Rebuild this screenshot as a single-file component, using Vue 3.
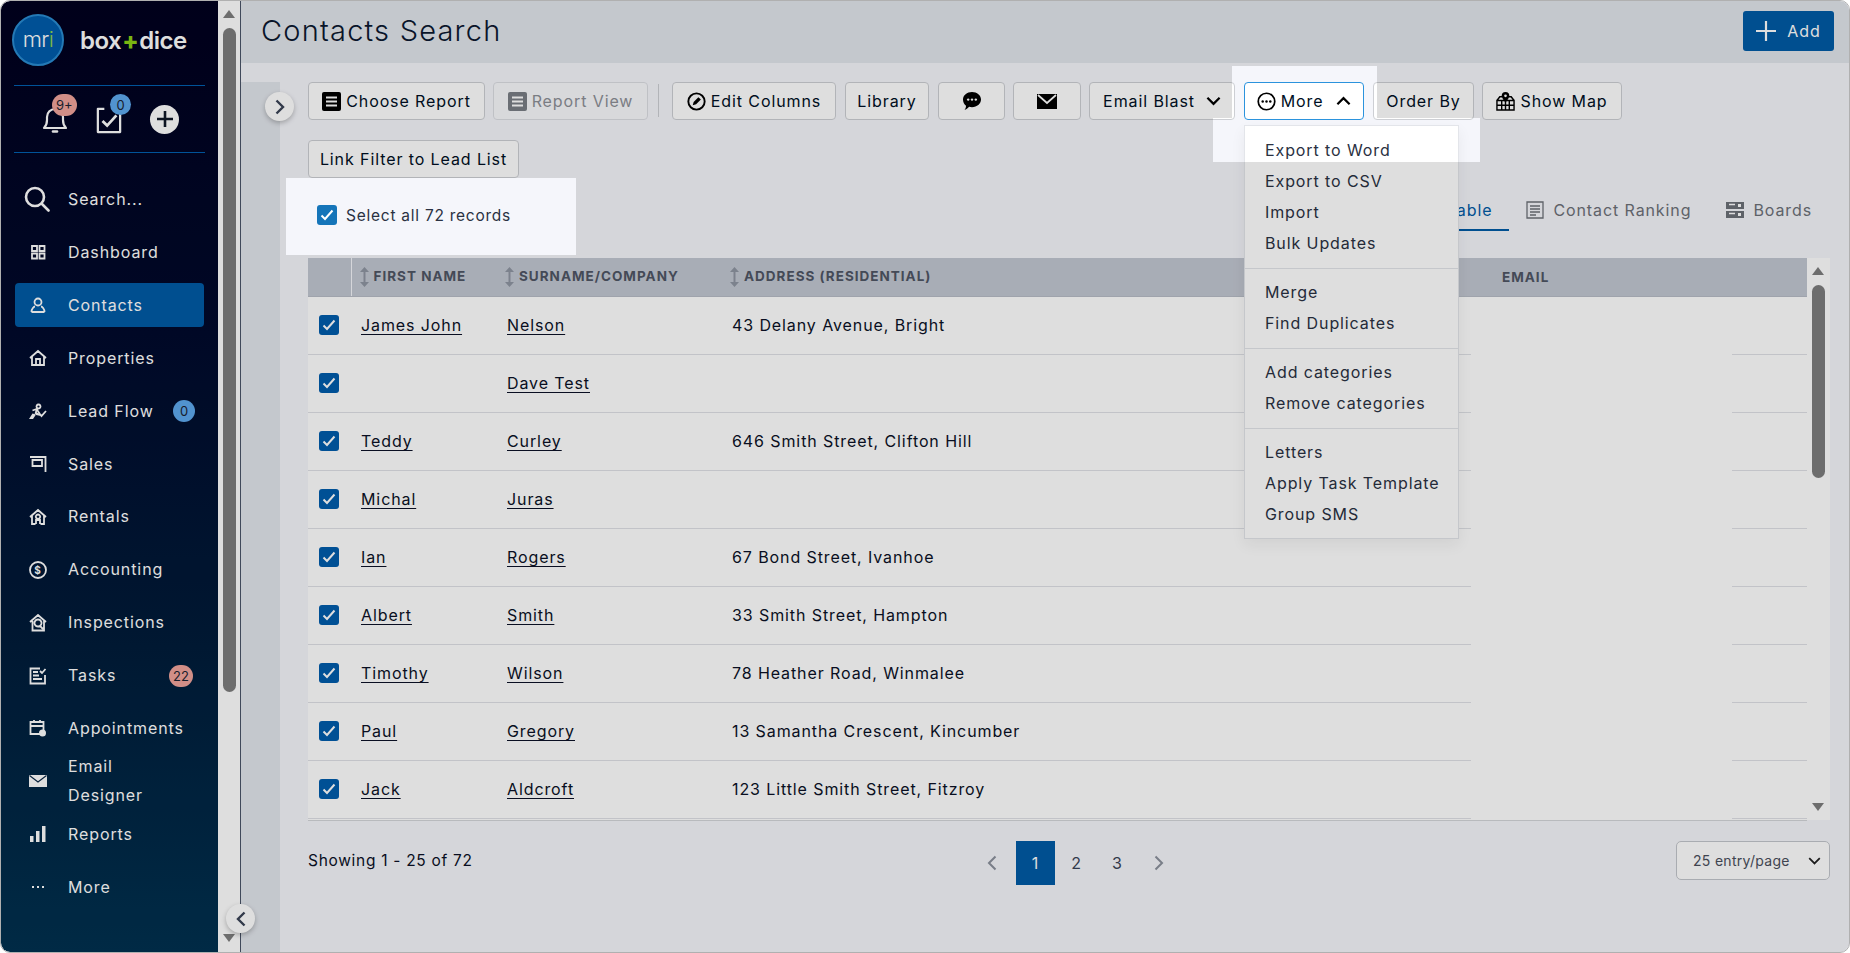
<template>
  <div class="window">
    <aside class="sidebar">
      <div class="brand">
        <div class="logo">mr<span class="logo-i">i</span></div>
        <div class="wordmark">box<span class="plus">+</span>dice</div>
      </div>
      <div class="quick">
        <div class="quick-item">
          <svg class="quick-icon" viewBox="0 0 26 28" fill="none" stroke="#fff" stroke-width="2.2">
            <path d="M2 22c2-2 3-4 3-8V11a8 8 0 0 1 16 0v3c0 4 1 6 3 8z" stroke-linejoin="round" />
            <path d="M11 25.5h4" stroke-linecap="round" stroke-width="2.6" />
          </svg>
          <span class="pill pill-red pill-top">9+</span>
        </div>
        <div class="quick-item task">
          <svg class="quick-icon" viewBox="0 0 28 30" fill="none" stroke="#fff" stroke-width="2.4">
            <path d="M9 3H2v25h24V5" stroke-linejoin="round" />
            <path d="M7 16l5 5 10-11" stroke-width="3" />
          </svg>
          <span class="pill pill-blue pill-top">0</span>
        </div>
        <div class="quick-add">
          <svg viewBox="0 0 18 18" width="18" height="18" stroke="#101828" stroke-width="2.6"><path d="M9 1v16M1 9h16" /></svg>
        </div>
      </div>
      <nav class="nav">
        <a class="nav-item search">
          <svg class="search-icon" viewBox="0 0 26 26" fill="none" stroke="#fff" stroke-width="2.6" stroke-linecap="round">
            <circle cx="11" cy="11" r="9" />
            <path d="M18 18l6.5 6.5" />
          </svg>
          <span>Search...</span>
        </a>
        <a v-for="item in navItems" :key="item.label" class="nav-item" :class="{ active: item.active }">
          <svg class="nav-icon" viewBox="0 0 18 18" fill="none" stroke="#fff" stroke-width="1.8">
            <path v-if="item.stroke" :d="item.stroke" />
            <path v-if="item.fill" :d="item.fill" fill="#fff" stroke="none" />
            <path v-if="item.cut" :d="item.cut" stroke="#0d2a48" stroke-width="1.2" />
            <text v-if="item.label === 'Accounting'" x="9" y="12.6" text-anchor="middle" font-size="10" font-weight="700" fill="#fff" stroke="none" font-family="Inter, sans-serif">$</text>
          </svg>
          <span class="nav-label">{{ item.label }}</span>
          <span v-if="item.badge" class="pill nav-badge" :class="item.badgeClass">{{ item.badge }}</span>
        </a>
      </nav>
    </aside>

    <div class="page-scroll">
      <div class="arrow-up"></div>
      <div class="page-thumb"></div>
      <div class="arrow-down"></div>
    </div>

    <main class="main">
      <header class="topbar">
        <h1>Contacts Search</h1>
        <button class="add-btn">
          <svg viewBox="0 0 20 20" width="20" height="20" stroke="#fff" stroke-width="2.2"><path d="M10 0v20M0 10h20" /></svg>
          Add
        </button>
      </header>

      <div class="body">
        <div class="rail"></div>
        <div class="content">
          <div class="toolbar">
            <button class="btn w-choose">
              <svg class="doc-icon" viewBox="0 0 19 19"><rect width="19" height="19" rx="2" fill="#000" /><path d="M4 5.5h11M4 9.5h11M4 13.5h11" stroke="#fff" stroke-width="1.8" /></svg>
              Choose Report
            </button>
            <button class="btn disabled w-view">
              <svg class="doc-icon" viewBox="0 0 19 19"><rect width="19" height="19" rx="2" fill="#7a7f86" /><path d="M4 5.5h11M4 9.5h11M4 13.5h11" stroke="#fff" stroke-width="1.8" /></svg>
              Report View
            </button>
            <span class="vr"></span>
            <button class="btn w-edit">
              <svg class="doc-icon" viewBox="0 0 20 20" fill="none" stroke="#000" stroke-width="2"><circle cx="10" cy="10" r="8.6" /><path d="M6 14l1-3.6 5-5 2.6 2.6-5 5z" fill="#000" stroke="none" /></svg>
              Edit Columns
            </button>
            <button class="btn w-library">Library</button>
            <button class="btn w-chat">
              <svg viewBox="0 0 20 20" width="20" height="20"><path d="M10 1c5 0 9 3.3 9 7.6s-4 7.6-9 7.6c-1 0-2-.1-2.900-.4C5.800 17.400 4.200 18.600 2.500 18.800c1-1 1.500-2.400 1.500-4C2 13.300 1 11.100 1 8.600 1 4.300 5 1 10 1z" fill="#000" /><circle cx="6.200" cy="8.600" r="1.200" fill="#fff" /><circle cx="10" cy="8.600" r="1.200" fill="#fff" /><circle cx="13.800" cy="8.600" r="1.200" fill="#fff" /></svg>
            </button>
            <button class="btn w-mail">
              <svg viewBox="0 0 20 15" width="20" height="15"><path d="M0 0h20v15H0z" fill="#000" /><path d="M1 1l9 8 9-8" fill="none" stroke="#fff" stroke-width="1.700" /></svg>
            </button>
            <button class="btn w-blast">
              Email Blast
              <svg class="chev" viewBox="0 0 16 10" fill="none" stroke="#000" stroke-width="2.400"><path d="M1.500 1.500L8 8l6.500-6.500" /></svg>
            </button>
            <button class="btn open w-more">
              <svg class="doc-icon" viewBox="0 0 20 20" fill="none" stroke="#000" stroke-width="1.800"><circle cx="10" cy="10" r="8.700" /><circle cx="6" cy="10" r="1.300" fill="#000" stroke="none" /><circle cx="10" cy="10" r="1.300" fill="#000" stroke="none" /><circle cx="14" cy="10" r="1.300" fill="#000" stroke="none" /></svg>
              More
              <svg class="chev" viewBox="0 0 16 10" fill="none" stroke="#000" stroke-width="2.400"><path d="M1.500 8.500L8 2l6.500 6.500" /></svg>
            </button>
            <button class="btn w-order">Order By</button>
            <button class="btn w-map">
              <svg class="doc-icon" viewBox="0 0 20 20" fill="none" stroke="#000" stroke-width="1.500">
                <path d="M1 9h18v10H1zM1 14h18M6 9v10M10 9v10M14 9v10M1 9l3-4h3M19 9l-3-4h-3" />
                <path d="M10 0a4 4 0 0 1 4 4c0 2.500-4 7-4 7S6 6.500 6 4a4 4 0 0 1 4-4z" fill="#000" stroke="none" />
                <circle cx="10" cy="4" r="1.400" fill="#fff" stroke="none" />
              </svg>
              Show Map
            </button>
            <button class="btn w-link">Link Filter to Lead List</button>
          </div>

          <div class="list-head">
            <label class="select-all">
              <span class="check bright">
                <svg viewBox="0 0 14 12" width="14" height="12" fill="none" stroke="#fff" stroke-width="2"><path d="M1.500 6.500l3.500 3.500 7.500-8.500" /></svg>
              </span>
              Select all 72 records
            </label>
            <div class="tabs">
              <a class="tab active">Table</a>
              <a class="tab">
                <svg class="tab-icon" viewBox="0 0 18 18" fill="none" stroke="#6d7178" stroke-width="1.300"><path d="M1 1h16v16H1zM4 5h10M4 8h10M4 11h10M4 14h6" /></svg>
                Contact Ranking
              </a>
              <a class="tab">
                <svg class="tab-icon" viewBox="0 0 18 18"><path d="M0 1h18v7H0zM0 10h18v7H0z" fill="#6d7178" /><path d="M3 3.500h6M3 12.500h6" stroke="#fff" stroke-width="1.500" /><rect x="12" y="3" width="3" height="3" fill="#fff" /><rect x="12" y="12" width="3" height="3" fill="#fff" /></svg>
                Boards
              </a>
            </div>
          </div>

          <div class="table-wrap">
            <div class="table-area">
              <table class="contacts">
                <colgroup>
                  <col class="c-check" />
                  <col class="c-first" />
                  <col class="c-last" />
                  <col class="c-address" />
                  <col class="c-email" />
                  <col />
                </colgroup>
                <thead>
                  <tr>
                    <th></th>
                    <th v-for="col in columns" :key="col"><span class="sort">
                      <svg viewBox="0 0 9 24" width="9" height="24" fill="#8f96a3"><path d="M4.500 2L9 7H0zM4.500 22L0 17h9zM3.500 6h2v12h-2z" /></svg>
                    </span>{{ col }}</th>
                    <th class="plain">EMAIL</th>
                    <th></th>
                  </tr>
                </thead>
                <tbody>
                  <tr v-for="row in rows" :key="row.last">
                    <td class="cell-check">
                      <span class="check">
                        <svg viewBox="0 0 14 12" width="14" height="12" fill="none" stroke="#fff" stroke-width="2"><path d="M1.500 6.500l3.500 3.500 7.500-8.500" /></svg>
                      </span>
                    </td>
                    <td><a class="link">{{ row.first }}</a></td>
                    <td><a class="link">{{ row.last }}</a></td>
                    <td>{{ row.address }}</td>
                    <td class="no-line"></td>
                    <td></td>
                  </tr>
                </tbody>
              </table>
            </div>
            <div class="table-scroll">
              <div class="arrow-up"></div>
              <div class="table-thumb"></div>
              <div class="arrow-down"></div>
            </div>
          </div>

          <footer class="pager-row">
            <span class="showing">Showing 1 - 25 of 72</span>
            <div class="pager">
              <svg class="pager-arrow" viewBox="0 0 10 16" fill="none" stroke="#8b919c" stroke-width="2"><path d="M8.500 1.500L2 8l6.500 6.500" /></svg>
              <span class="page current">1</span>
              <span class="page">2</span>
              <span class="page">3</span>
              <svg class="pager-arrow" viewBox="0 0 10 16" fill="none" stroke="#8b919c" stroke-width="2"><path d="M1.500 1.500L8 8l-6.500 6.500" /></svg>
            </div>
            <div class="entries">
              25 entry/page
              <svg class="chev" viewBox="0 0 16 10" fill="none" stroke="#222" stroke-width="2.200"><path d="M1.500 1.500L8 8l6.500-6.500" /></svg>
            </div>
          </footer>
        </div>
      </div>
    </main>

    <div class="menu">
      <template v-for="(group, i) in menuGroups" :key="i">
        <div v-if="i > 0" class="menu-sep"></div>
        <a v-for="entry in group" :key="entry" class="menu-item">{{ entry }}</a>
      </template>
    </div>

    <div class="round-btn expand">
      <svg viewBox="0 0 10 16" width="10" height="16" fill="none" stroke="#3a4356" stroke-width="2.400"><path d="M1.500 1.500L8 8l-6.500 6.500" /></svg>
    </div>
    <div class="round-btn collapse">
      <svg viewBox="0 0 10 16" width="10" height="16" fill="none" stroke="#3a4356" stroke-width="2.400"><path d="M8.500 1.500L2 8l6.500 6.500" /></svg>
    </div>

    <div class="dim"></div>
  </div>
</template>

<script setup>
const navItems = [
  { label: "Dashboard", stroke: "M3 3h5v5H3zM10.500 3h5v5h-5zM3 10.500h5v5H3zM10.500 10.500h5v5h-5z" },
  { label: "Contacts", active: true, stroke: "M9 2.500a3.500 3.500 0 1 1 0 7 3.500 3.500 0 0 1 0-7zM2.500 16c0-3.500 2.500-5.500 3.500-5.500M15.500 16c0-3.500-2.500-5.500-3.500-5.500M2.500 16h13" },
  { label: "Properties", stroke: "M1 9l8-7 8 7M3 7.500V16h12V7.500M7 16v-6h4v6" },
  { label: "Lead Flow", badge: "0", badgeClass: "pill-blue", stroke: "M9.500 2.500a2 2 0 1 0 .01 0M3.500 8.500l4-1.500 3 4.500 2 2.500 4.500-5M7.500 8l-1 4", fill: "M0 17l3.500-5.500 3.500 1L4 17zM7 10l4 2 1 2-5-1z" },
  { label: "Sales", stroke: "M1 2h15.500v15M3.500 5h9.500v6H3.500z" },
  { label: "Rentals", stroke: "M1 9l8-7 8 7M3 7.500V16h3.500M15 7.500V16h-3.500M7 16v-4h4v4M9 6.500a2.200 2.200 0 1 0 .01 0" },
  { label: "Accounting", stroke: "M9 1a8 8 0 1 1 0 16A8 8 0 0 1 9 1z" },
  { label: "Inspections", stroke: "M1 8l8-7 8 7M3.500 7v9.500H15V7M9 5.500a3.500 3.500 0 1 0 .01 0M11 12l3 3" },
  { label: "Tasks", badge: "22", badgeClass: "pill-red", stroke: "M16 8v8.500H1.500V1.500H11M4 5h5M4 8.500h6M4 12h9M11 4l2 2 3.500-4" },
  { label: "Appointments", stroke: "M1.500 3h13v12h-13zM1.500 7h13M5 1v3M11 1v3", fill: "M13.500 10.500a3.500 3.500 0 1 1 0 7 3.500 3.500 0 0 1 0-7z" },
  { label: "Email Designer", fill: "M0 3h18v12H0z", cut: "M0.500 3.500L9 10l8.500-6.500" },
  { label: "Reports", fill: "M1 11h3.500v6H1zM7 6h3.500v11H7zM13 1h3.500v16H13z" },
  { label: "More", fill: "M3 8h2v2H3zM8 8h2v2H8zM13 8h2v2h-2z" },
];

const columns = ["FIRST NAME", "SURNAME/COMPANY", "ADDRESS (RESIDENTIAL)"];

const rows = [
  { first: "James John", last: "Nelson", address: "43 Delany Avenue, Bright" },
  { first: "", last: "Dave Test", address: "" },
  { first: "Teddy", last: "Curley", address: "646 Smith Street, Clifton Hill" },
  { first: "Michal", last: "Juras", address: "" },
  { first: "Ian", last: "Rogers", address: "67 Bond Street, Ivanhoe" },
  { first: "Albert", last: "Smith", address: "33 Smith Street, Hampton" },
  { first: "Timothy", last: "Wilson", address: "78 Heather Road, Winmalee" },
  { first: "Paul", last: "Gregory", address: "13 Samantha Crescent, Kincumber" },
  { first: "Jack", last: "Aldcroft", address: "123 Little Smith Street, Fitzroy" },
];

const menuGroups = [
  ["Export to Word", "Export to CSV", "Import", "Bulk Updates"],
  ["Merge", "Find Duplicates"],
  ["Add categories", "Remove categories"],
  ["Letters", "Apply Task Template", "Group SMS"],
];
</script>

<style>
html,
body {
  margin: 0;
  background: #fff;
}
</style>

<style scoped>
.window {
  position: relative;
  width: 1850px;
  height: 953px;
  box-sizing: border-box;
  display: flex;
  overflow: hidden;
  border: 1px solid #b0b0b0;
  border-radius: 10px;
  background: #f5f6fb;
  font-family: Inter, "Open Sans", sans-serif;
  font-size: 16px;
  letter-spacing: 0.9px;
  color: #0b1126;
}

/* sidebar */
.sidebar {
  width: 217px;
  flex: none;
  background: linear-gradient(180deg, #00001e 0%, #000a2c 35%, #001c3a 68%, #003150 100%);
  color: #fff;
  border-radius: 9px 0 0 9px;
}
.brand {
  height: 85px;
  box-sizing: border-box;
  margin: 0 13px;
  padding-bottom: 6px;
  display: flex;
  align-items: center;
  border-bottom: 1px solid #0060b0;
}
.logo {
  width: 52px;
  height: 52px;
  flex: none;
  margin-left: -2px;
  box-sizing: border-box;
  border: 2px solid #2a8cd0;
  border-radius: 50%;
  background: #005cac;
  display: flex;
  align-items: center;
  justify-content: center;
  font-size: 22px;
  font-weight: 300;
  letter-spacing: -0.5px;
  color: #fff;
  padding-bottom: 3px;
}
.logo-i {
  color: #8fd14f;
}
.wordmark {
  margin-left: 16px;
  font-size: 24px;
  font-weight: 600;
  letter-spacing: -0.5px;
}
.plus {
  color: #8cd014;
  font-weight: 800;
  margin: 0 1px;
}
.quick {
  height: 66px;
  margin: 0 13px;
  border-bottom: 1px solid #0060b0;
  display: flex;
  align-items: center;
  padding-left: 28px;
  position: relative;
}
.quick-item {
  position: relative;
  width: 54px;
  display: flex;
  padding-top: 2px;
}
.quick-icon {
  width: 26px;
  height: 28px;
}
.pill {
  display: inline-flex;
  align-items: center;
  justify-content: center;
  height: 22px;
  min-width: 22px;
  box-sizing: border-box;
  border-radius: 11px;
  padding: 0 4px;
  font-size: 13px;
  letter-spacing: 0;
  color: #1c2433;
}
.pill-red {
  background: #f0a49c;
}
.pill-blue {
  background: #5ea9ee;
}
.pill-top {
  position: absolute;
  left: 10px;
  top: -10px;
}
.task .pill-top {
  left: 14px;
  height: 21px;
  min-width: 21px;
}
.quick-add {
  width: 29px;
  height: 29px;
  margin-top: 0;
  border-radius: 50%;
  background: #fff;
  display: flex;
  align-items: center;
  justify-content: center;
}
.nav {
  padding: 20px 14px 0;
}
.nav-item {
  height: 52.900px;
  display: flex;
  align-items: center;
  padding-left: 14px;
  color: #fff;
  border-radius: 4px;
}
.nav-item.search {
  padding-left: 9px;
  margin-bottom: 0;
}
.nav-item.active {
  background: #005ba6;
  height: 44px;
  margin: 4.500px 0;
}
.search-icon {
  width: 26px;
  height: 26px;
  margin-right: 18px;
}
.nav-icon {
  width: 18px;
  height: 18px;
  flex: none;
  margin-right: 21px;
}
.nav-label {
  flex: 1;
  line-height: 29px;
  max-width: 118px;
}
.nav-badge {
  position: absolute;
  left: 168px;
}
.nav-badge.pill-blue {
  left: 172px;
}

/* window scrollbar */
.page-scroll {
  width: 22px;
  flex: none;
  background: #fff;
  border-right: 1px solid #4a5468;
  box-sizing: content-box;
  position: relative;
}
.page-thumb {
  position: absolute;
  left: 5px;
  top: 27px;
  width: 13px;
  height: 664px;
  border-radius: 7px;
  background: #7e7e7e;
}
.arrow-up,
.arrow-down {
  position: absolute;
  width: 0;
  height: 0;
  border-left: 6px solid transparent;
  border-right: 6px solid transparent;
}
.arrow-up {
  top: 9px;
  left: 5px;
  border-bottom: 8px solid #7e7e7e;
}
.arrow-down {
  bottom: 10px;
  left: 5px;
  border-top: 8px solid #7e7e7e;
}

/* main */
.main {
  flex: 1;
  min-width: 0;
  display: flex;
  flex-direction: column;
}
.topbar {
  height: 62px;
  flex: none;
  background: #e2e6ec;
  display: flex;
  align-items: center;
  justify-content: space-between;
  padding: 0 15px 0 20px;
}
.topbar h1 {
  margin: 0 0 4px;
  font-size: 29px;
  font-weight: 300;
  letter-spacing: 1.2px;
  color: #0b1830;
}
.add-btn {
  width: 91px;
  height: 40px;
  margin-bottom: 3px;
  border: none;
  border-radius: 3px;
  background: #005ba6;
  color: #fff;
  font: inherit;
  letter-spacing: inherit;
  display: flex;
  align-items: center;
  justify-content: center;
  gap: 11px;
}
.body {
  flex: 1;
  min-height: 0;
  display: flex;
  padding-top: 19px;
}
.rail {
  width: 39px;
  flex: none;
  background: #e2e6ec;
}
.content {
  flex: 1;
  min-width: 0;
  padding-left: 28px;
  padding-right: 19px;
  display: flex;
  flex-direction: column;
}

/* toolbar */
.toolbar {
  display: flex;
  flex-wrap: wrap;
  gap: 20px 8px;
  width: 1340px;
}
.btn {
  height: 38px;
  box-sizing: border-box;
  padding: 0;
  border: 1px solid #cdcfd4;
  border-radius: 4px;
  background: #fff;
  font: inherit;
  letter-spacing: inherit;
  color: #000f24;
  display: inline-flex;
  align-items: center;
  justify-content: center;
  gap: 5px;
}
.btn.disabled {
  background: #f9fafc;
  border-color: #dcdee3;
  color: #8d9097;
}
.btn.open {
  border-color: #2b93dd;
}
.w-choose { width: 177px; }
.w-view { width: 155px; }
.w-edit { width: 164px; }
.w-library { width: 84px; margin-left: 1px; }
.w-chat { width: 67px; margin-left: 1px; }
.w-mail { width: 68px; }
.w-blast { width: 146px; gap: 11px; }
.w-more { width: 120px; margin-left: 1px; }
.w-order { width: 101px; margin-left: 1px; }
.w-map { width: 140px; }
.w-link { width: 211px; }
.doc-icon {
  width: 19px;
  height: 19px;
  flex: none;
}
.vr {
  width: 1px;
  height: 33px;
  margin: 2px 5px 0 2px;
  background: #cdcfd4;
}
.chev {
  width: 15px;
  height: 10px;
  flex: none;
}
.w-more .chev {
  margin-left: 8px;
}

/* select all + tabs */
.list-head {
  height: 80px;
  display: flex;
  justify-content: space-between;
  align-items: flex-start;
  flex: none;
}
.select-all {
  display: flex;
  align-items: center;
  gap: 9px;
  margin: 27px 0 0 9px;
  font-size: 15.500px;
  letter-spacing: 0.750px;
  color: #2a3142;
}
.check {
  width: 20px;
  height: 20px;
  flex: none;
  border-radius: 3px;
  background: #005cac;
  display: inline-flex;
  align-items: center;
  justify-content: center;
}
.check.bright {
  background: #1575b9;
}
.tabs {
  display: flex;
  margin-top: 15px;
  margin-right: 18px;
  gap: 35px;
  color: #6d7178;
}
.tab {
  height: 38px;
  box-sizing: border-box;
  display: flex;
  align-items: center;
  gap: 9px;
  padding: 0 0 2px 0;
  border-bottom: 2px solid transparent;
}
.tab.active {
  color: #005ba6;
  border-bottom-color: #005ba6;
  padding: 0 17px 2px 0;
  margin-right: -18px;
}
.tab-icon {
  width: 18px;
  height: 18px;
}

/* table */
.table-wrap {
  display: flex;
  height: 563px;
  flex: none;
}
.table-area {
  flex: 1;
  min-width: 0;
  background: #fff;
  overflow: hidden;
  border-bottom: 1px solid #d4d6da;
  box-sizing: border-box;
}
.contacts {
  width: 100%;
  table-layout: fixed;
  border-collapse: collapse;
}
.c-check { width: 43px; }
.c-first { width: 146px; }
.c-last { width: 225px; }
.c-address { width: 749px; }
.c-email { width: 261px; }
.contacts th {
  height: 38px;
  padding: 0;
  box-sizing: border-box;
  background: #c2c7d1;
  color: #4f5564;
  text-align: left;
  font-size: 13.500px;
  font-weight: 700;
  letter-spacing: 1px;
  border-left: 1px solid #f5f6fb;
  border-bottom: 1px solid #b7bcc6;
}
.contacts th:first-child,
.contacts th:nth-child(n + 3) {
  border-left: none;
}
.contacts th.plain {
  padding-left: 31px;
}
.sort {
  display: inline-block;
  vertical-align: middle;
  margin: 0 5px 0 8px;
  line-height: 0;
}
.contacts td {
  height: 58px;
  padding: 0 0 0 10px;
  border-bottom: 1px solid #dfe1e6;
  box-sizing: border-box;
}
.contacts td.no-line {
  border-bottom-color: transparent;
}
.contacts td.cell-check {
  padding: 0 0 0 11px;
  line-height: 0;
}
.link {
  text-decoration: underline;
  text-underline-offset: 3px;
}
.table-scroll {
  width: 23px;
  flex: none;
  position: relative;
  background: #fff;
  height: 562px;
}
.table-scroll .arrow-up {
  left: 5px;
  top: 9px;
}
.table-scroll .arrow-down {
  left: 5px;
  bottom: 9px;
}
.table-thumb {
  position: absolute;
  left: 5px;
  top: 27px;
  width: 13px;
  height: 193px;
  border-radius: 7px;
  background: #7e7e7e;
}

/* pagination */
.pager-row {
  position: relative;
  display: flex;
  align-items: flex-start;
  padding-top: 20px;
}
.showing {
  font-size: 15.500px;
  letter-spacing: 0.700px;
  line-height: 40px;
}
.pager {
  position: absolute;
  left: 679px;
  top: 20px;
  display: flex;
  align-items: center;
  height: 44px;
  color: #3a4356;
}
.pager-arrow {
  width: 10px;
  height: 16px;
}
.page {
  width: 39px;
  height: 44px;
  margin: 0 1px;
  display: flex;
  align-items: center;
  justify-content: center;
}
.pager-arrow:first-child {
  margin-right: 18px;
}
.pager-arrow:last-child {
  margin-left: 16px;
}
.page.current {
  background: #005ba6;
  color: #fff;
}
.entries {
  position: absolute;
  right: 0;
  top: 20px;
  width: 154px;
  height: 39px;
  box-sizing: border-box;
  border: 1px solid #c3c6cc;
  border-radius: 5px;
  background: #fff;
  display: flex;
  align-items: center;
  justify-content: space-between;
  padding: 0 8px 0 16px;
  font-size: 14px;
  letter-spacing: 0.300px;
  color: #4a4f5c;
}
.entries .chev {
  width: 13px;
}

/* dropdown */
.menu {
  position: absolute;
  left: 1243px;
  top: 124px;
  width: 215px;
  height: 414px;
  box-sizing: border-box;
  padding: 9px 0;
  background: #fff;
  border: 1px solid #e3e5ea;
  box-shadow: 0 6px 14px rgba(0, 0, 0, 0.06);
  color: #2a3142;
}
.menu-item {
  display: block;
  height: 31px;
  line-height: 31px;
  padding-left: 20px;
}
.menu-sep {
  height: 1px;
  margin: 8.500px 0;
  background: #e3e5ea;
}

.round-btn {
  position: absolute;
  width: 29px;
  height: 29px;
  border-radius: 50%;
  background: #fff;
  box-shadow: 0 2px 5px rgba(0, 0, 0, 0.25);
  display: flex;
  align-items: center;
  justify-content: center;
}
.expand {
  left: 264px;
  top: 91px;
}
.collapse {
  left: 225px;
  top: 903px;
}

/* spotlight: everything is dimmed but the two tutorial cut-outs */
.dim {
  position: absolute;
  inset: -1px;
  background: rgba(0, 0, 0, 0.13);
  pointer-events: none;
  clip-path: path(evenodd, "M0 0H1850V953H0Z M286 178H576V255H286Z M1232 66H1377V118H1480V162H1213V118H1232Z");
}
</style>
